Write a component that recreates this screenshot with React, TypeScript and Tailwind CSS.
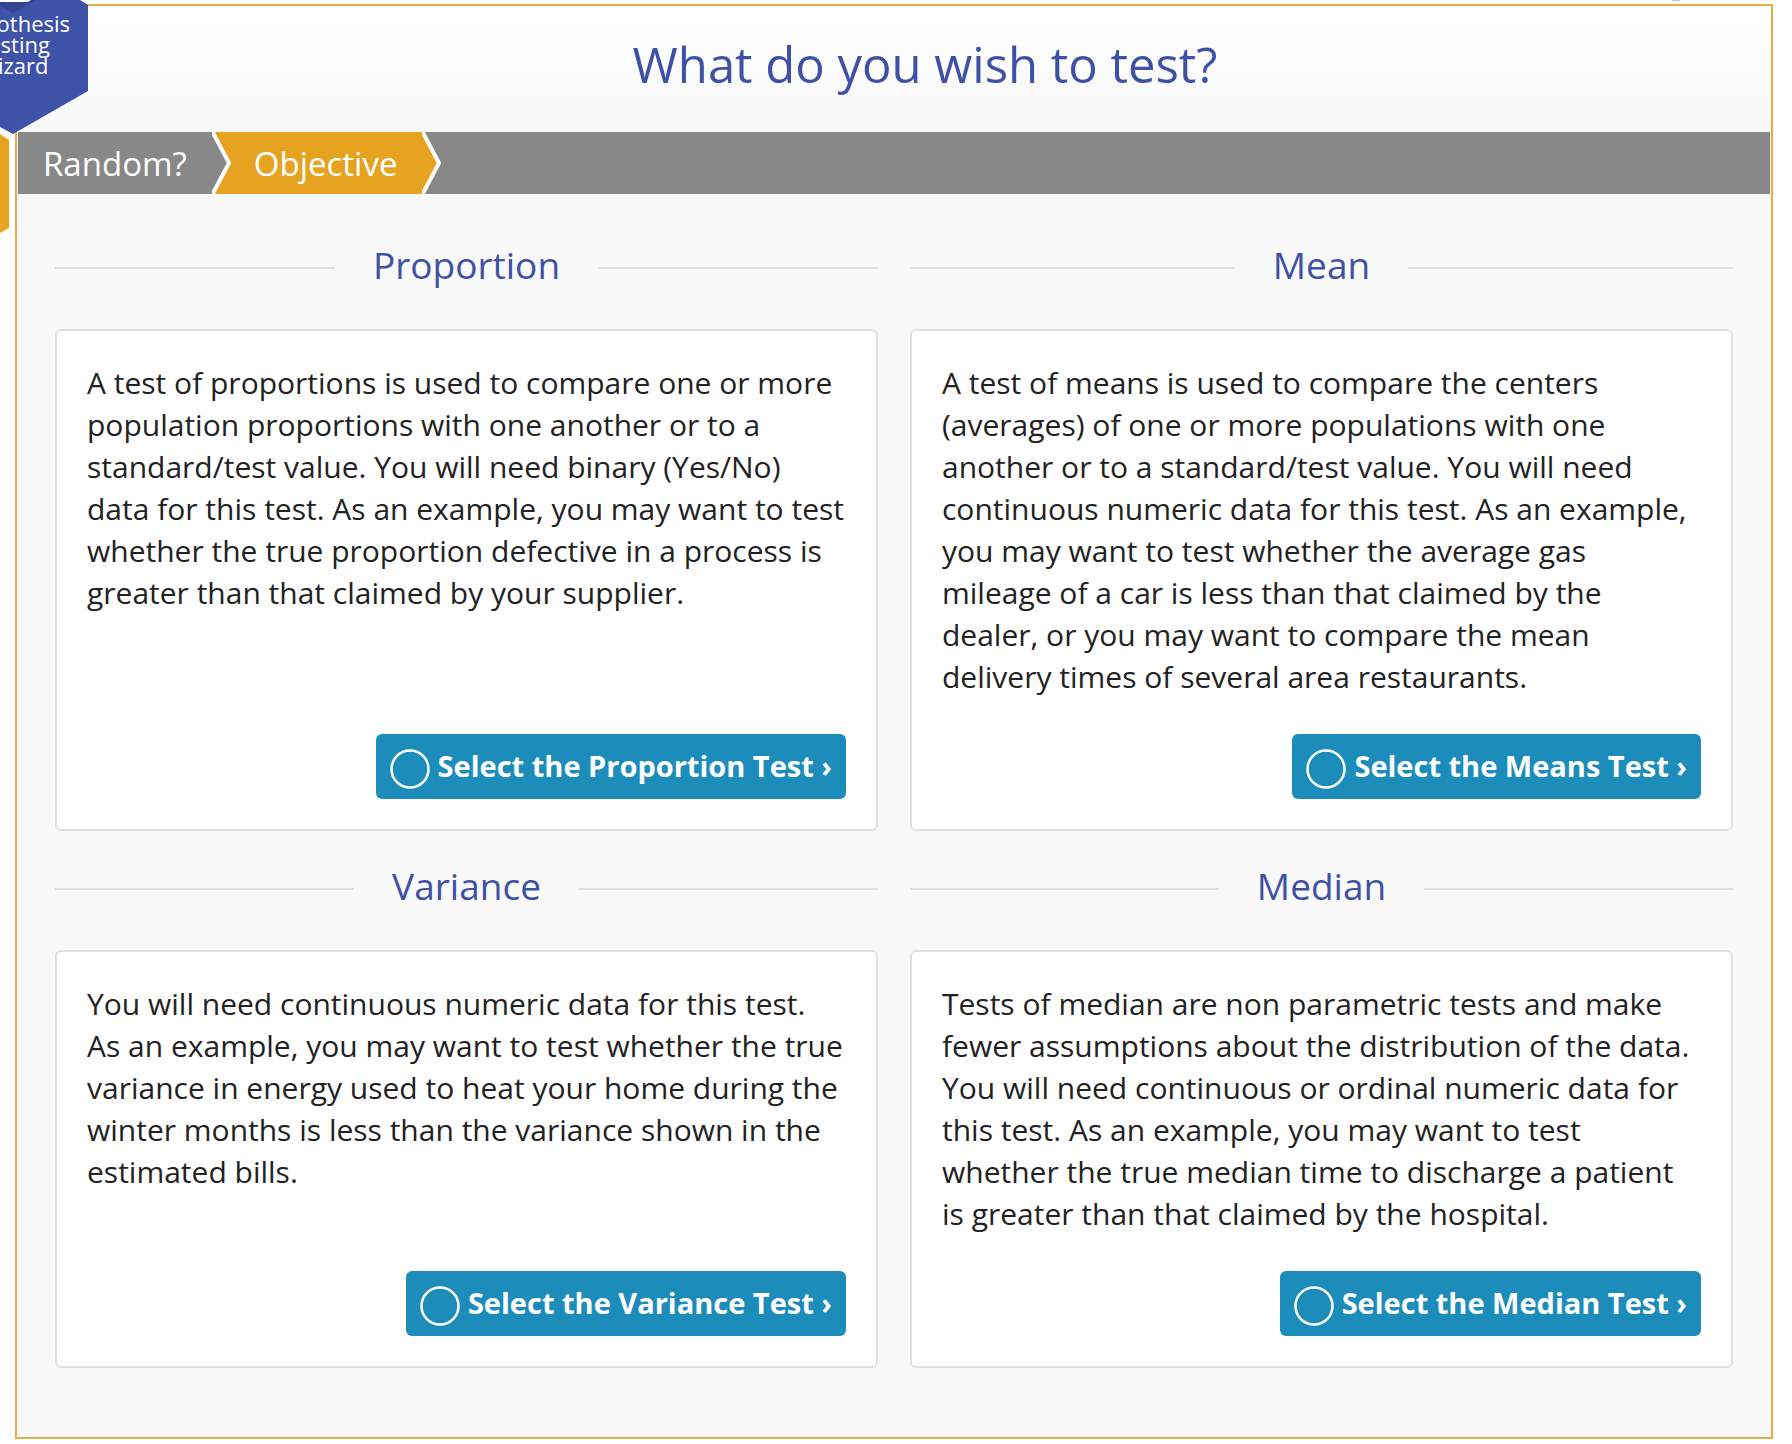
import { clsx } from 'clsx'

type Test = {
  title: string
  action: string
  description: string
}

const tests: Test[] = [
  {
    title: 'Proportion',
    action: 'Select the Proportion Test',
    description:
      'A test of proportions is used to compare one or more population proportions with one another or to a standard/test value. You will need binary (Yes/No) data for this test. As an example, you may want to test whether the true proportion defective in a process is greater than that claimed by your supplier.',
  },
  {
    title: 'Mean',
    action: 'Select the Means Test',
    description:
      'A test of means is used to compare the centers (averages) of one or more populations with one another or to a standard/test value. You will need continuous numeric data for this test. As an example, you may want to test whether the average gas mileage of a car is less than that claimed by the dealer, or you may want to compare the mean delivery times of several area restaurants.',
  },
  {
    title: 'Variance',
    action: 'Select the Variance Test',
    description:
      'You will need continuous numeric data for this test. As an example, you may want to test whether the true variance in energy used to heat your home during the winter months is less than the variance shown in the estimated bills.',
  },
  {
    title: 'Median',
    action: 'Select the Median Test',
    description:
      'Tests of median are non parametric tests and make fewer assumptions about the distribution of the data. You will need continuous or ordinal numeric data for this test. As an example, you may want to test whether the true median time to discharge a patient is greater than that claimed by the hospital.',
  },
]

function TestCard({ test }: { test: Test }) {
  return (
    <section className="flex flex-col">
      <div className="flex h-[119px] items-center gap-[38px] pb-1">
        <span className="h-0.5 flex-1 bg-[#e0e0e0]" />
        <h2 className="pb-1.5 text-[37px] leading-[48px] text-[#3f51a5]">{test.title}</h2>
        <span className="h-0.5 flex-1 bg-[#e0e0e0]" />
      </div>
      <div className="flex flex-1 flex-col rounded-md border-2 border-[#e0e0e0] bg-white px-[30px] pt-[31px] pb-[30px]">
        <p className="mb-9 text-[30px] leading-[42px] text-[#222222]">{test.description}</p>
        <button
          type="button"
          className="mt-auto flex h-[65px] items-center gap-2 self-end rounded-md bg-[#1c8cba] px-3.5 pb-0.5 text-[29px] font-bold text-white"
        >
          <svg viewBox="0 0 40 40" className="mt-1.5 size-10" fill="none" stroke="currentColor" strokeWidth="2.5" aria-hidden="true">
            <circle cx="20" cy="20" r="18.5" />
          </svg>
          <span className="whitespace-nowrap">{test.action} ›</span>
        </button>
      </div>
    </section>
  )
}

function Step({ label, active }: { label: string; active?: boolean }) {
  return (
    <li className="flex">
      <a
        href="#"
        aria-current={active ? 'step' : undefined}
        className={clsx('flex items-center pt-0.5 pr-[25px] text-[33px] text-white', active ? 'bg-[#e6a31f] pl-[22px]' : 'bg-[#888888] pl-[25px]')}
      >
        {label}
      </a>
      <svg viewBox="0 0 20 62" className="h-[62px] w-5" aria-hidden="true">
        <rect width="20" height="62" className={active ? 'fill-[#888888]' : 'fill-[#e6a31f]'} />
        <path d="M0 0 L17 31 L0 62 Z" className={active ? 'fill-[#e6a31f]' : 'fill-[#888888]'} />
        <path d="M-1 -3 L17 31 L-1 65" fill="none" stroke="#ffffff" strokeWidth="4" />
      </svg>
    </li>
  )
}

// Hexagon menu that peeks in from the left edge of the window
function HexMenu() {
  return (
    <div className="absolute top-0 left-0 h-60 w-[90px] overflow-hidden">
      <svg viewBox="0 0 90 240" className="h-60 w-[90px]" aria-hidden="true">
        <path d="M-10 129 L0 134 L9 140 V228 L0 233 L-10 239 Z" fill="#e6a31f" />
        <path d="M0 0 H80 L88 5 V91 L13 134 L0 127 Z" fill="#3e52a8" />
        <path d="M0 0 H36 L13 13 L0 6 Z" fill="#34458f" />
        <path d="M0 0 H31 L28 2 H0 Z" fill="#ffffff" />
      </svg>
      <a href="#" className="absolute top-[13px] -left-[62px] w-[150px] text-center text-[22px] leading-[21px] text-white">
        Hypothesis
        <br />
        Testing
        <br />
        Wizard
      </a>
    </div>
  )
}

export default function App() {
  return (
    <div className="relative overflow-hidden bg-white pt-1 pr-[19px] pb-[5px] pl-[15px] font-['Open_Sans','Noto_Sans',sans-serif]">
      <main className="border-2 border-[#e3ad4b] bg-[#f9f9f9]">
        <header className="flex h-[126px] items-center justify-center bg-linear-to-b from-white to-[#f8f8f8] pb-2.5 pl-[62px]">
          <h1 className="text-[49px] leading-[64px] text-[#3f51a5]">What do you wish to test?</h1>
        </header>
        <nav aria-label="Progress" className="mx-px bg-[#888888]">
          <ol className="flex">
            <Step label="Random?" />
            <Step label="Objective" active />
          </ol>
        </nav>
        <div className="grid grid-cols-2 gap-x-8 px-[38px] pt-4 pb-[69px]">
          {tests.map((test) => (
            <TestCard key={test.title} test={test} />
          ))}
        </div>
      </main>
      <HexMenu />
      <span className="absolute top-0 right-28 h-px w-2 bg-[#c9c9d4]" />
    </div>
  )
}
